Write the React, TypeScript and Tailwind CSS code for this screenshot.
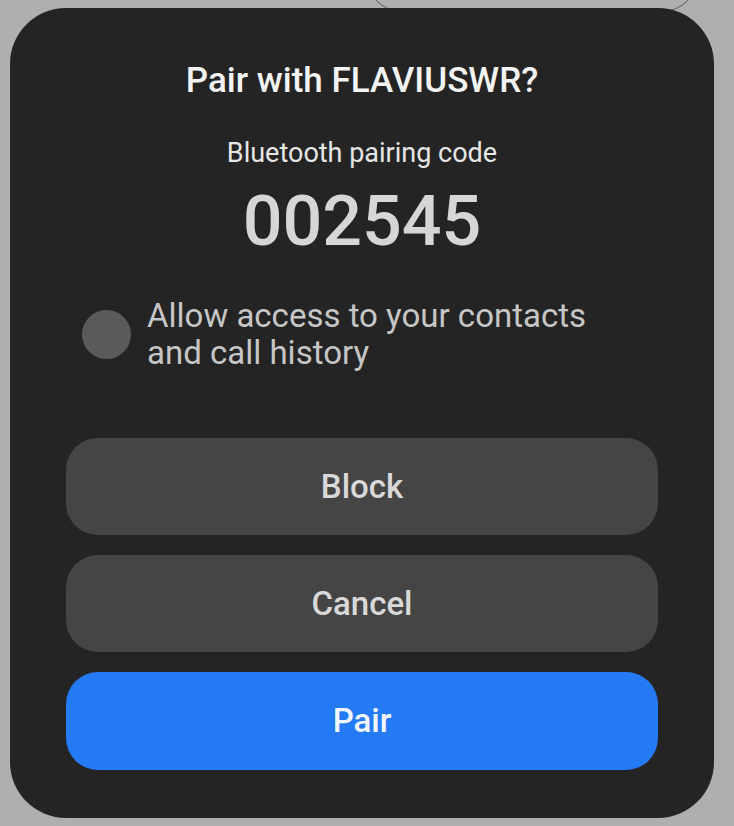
import React from 'react';

export default function App() {
    return (
        <div
            className="relative w-[734px] h-[826px] overflow-hidden bg-[#aeafb1]"
            style={{ fontFamily: 'Roboto, "Noto Sans", sans-serif' }}
        >
            {/* Edge of the window behind the dialog */}
            <div className="absolute left-[366px] top-[-60px] w-[332px] h-[72px] rounded-[40px] border border-[#5c5c5e]" />

            {/* Dialog */}
            <div className="relative ml-[10px] mt-[8px] w-[704px] h-[810px] rounded-[56px] bg-[#242424] flex flex-col items-center">
                <h1 className="mt-[53px] text-[35px] leading-[40px] font-medium text-[#f4f4f4]">
                    Pair with FLAVIUSWR?
                </h1>
                <p className="mt-[36px] text-[27px] leading-[32px] text-[#e6e6e6]">
                    Bluetooth pairing code
                </p>
                <div className="mt-[12px] text-[70px] leading-[80px] font-medium text-[#d6d6d6]">
                    002545
                </div>

                {/* Contacts permission */}
                <div className="mt-[36px] w-full pl-[72px] flex items-center gap-4">
                    <div className="w-[49px] h-[49px] rounded-full bg-[#5a5a5a] shrink-0" />
                    <p className="text-[33px] leading-[37px] text-[#c6c6c6]">
                        Allow access to your contacts
                        <br />
                        and call history
                    </p>
                </div>

                {/* Actions */}
                <div className="mt-[67px] w-full px-[56px] flex flex-col gap-[20px]">
                    <button className="h-[97px] rounded-[32px] bg-[#454545] text-[33px] font-medium text-[#d9d9d9]">
                        Block
                    </button>
                    <button className="h-[97px] rounded-[32px] bg-[#454545] text-[33px] font-medium text-[#d9d9d9]">
                        Cancel
                    </button>
                    <button className="h-[98px] rounded-[32px] bg-[#257af5] text-[33px] font-medium text-[#f3f7ff]">
                        Pair
                    </button>
                </div>
            </div>
        </div>
    );
}
